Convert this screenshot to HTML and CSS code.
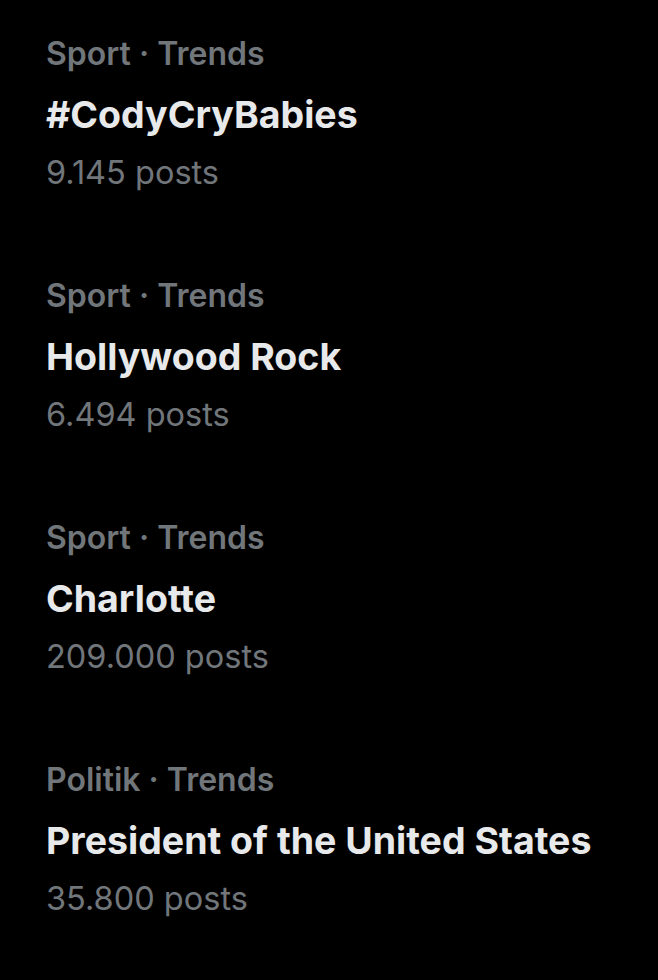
FILE: index.html
```html
<!DOCTYPE html>
<html>
<head>
    <title>Trends</title>
    <link rel="stylesheet" href="styles.css">
</head>
<body>
    <div class="trends">
        <div class="trend">
            <div class="meta">Sport · Trends</div>
            <div class="name">#CodyCryBabies</div>
            <div class="count">9.145 posts</div>
        </div>
        <div class="trend">
            <div class="meta">Sport · Trends</div>
            <div class="name">Hollywood Rock</div>
            <div class="count">6.494 posts</div>
        </div>
        <div class="trend">
            <div class="meta">Sport · Trends</div>
            <div class="name">Charlotte</div>
            <div class="count">209.000 posts</div>
        </div>
        <div class="trend">
            <div class="meta">Politik · Trends</div>
            <div class="name">President of the United States</div>
            <div class="count">35.800 posts</div>
        </div>
    </div>
</body>
</html>
```

FILE: styles.css
```css
body {
    margin: 0;
    background: #000;
    font-family: Inter, "Noto Sans", sans-serif;
}
.trends {
    display: flex;
    flex-direction: column;
    gap: 63px;
    padding: 22.5px 0 0 46px;
}
.meta {
    color: #71767b;
    font-size: 32px;
    font-weight: 600;
    line-height: 62px;
}
.name {
    color: #e7e9ea;
    font-size: 37.5px;
    font-weight: 700;
    line-height: 59px;
}
.count {
    color: #71767b;
    font-size: 32.5px;
    font-weight: 400;
    line-height: 58px;
}
```
